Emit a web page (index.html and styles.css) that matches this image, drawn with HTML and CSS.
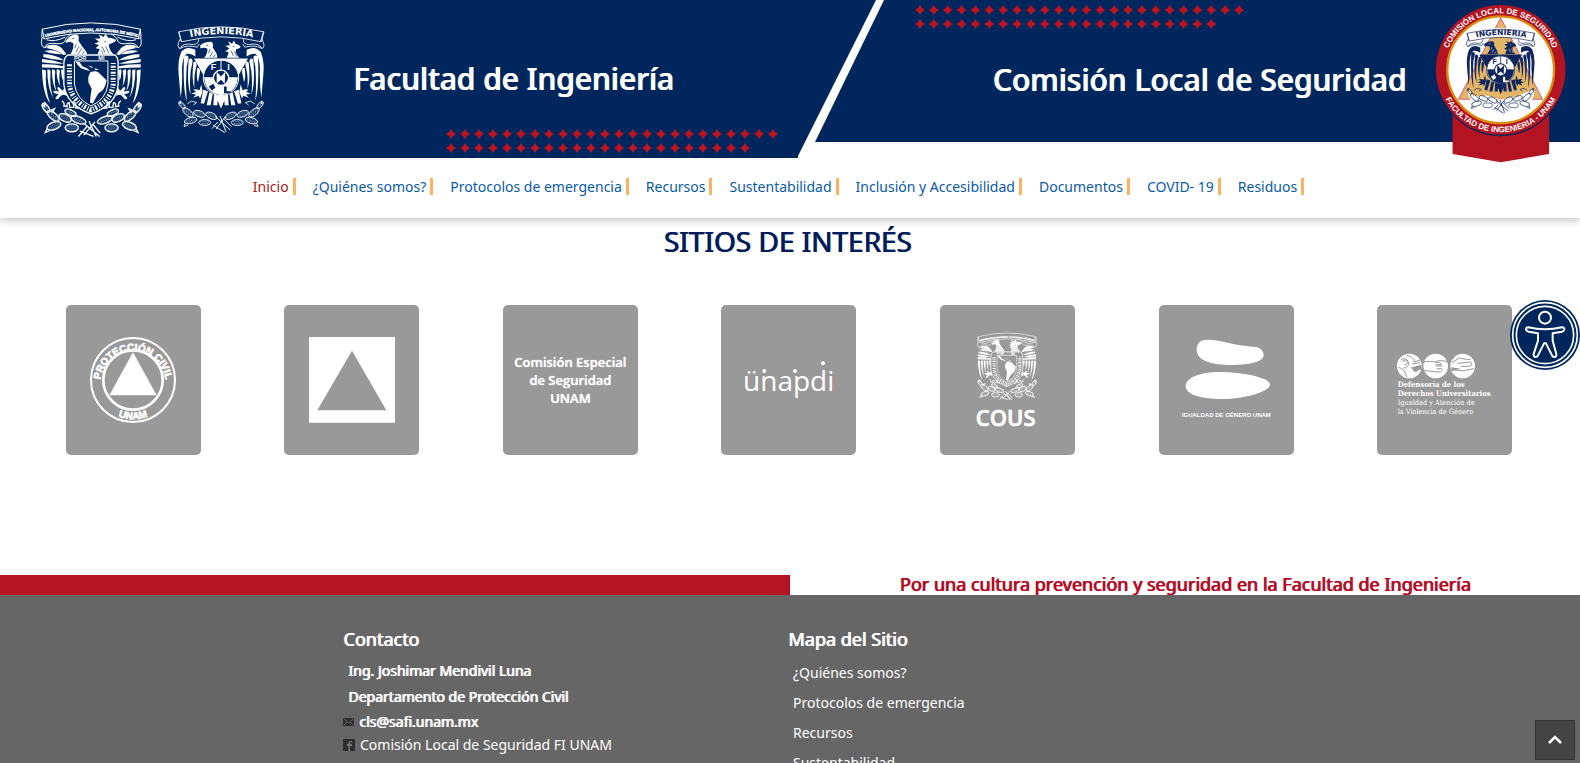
FILE: index.html
```html
<!DOCTYPE html>
<html lang="es">
<head>
<meta charset="utf-8">
<meta name="viewport" content="width=device-width, initial-scale=1">
<title>Comisión Local de Seguridad</title>
<link rel="stylesheet" href="styles.css">
</head>
<body>

<svg class="defs" aria-hidden="true">
  <defs>
    <pattern id="dotsA" x="444" y="127" width="14" height="14" patternUnits="userSpaceOnUse">
      <path class="star" d="M7 2L9 5L12 7L9 9L7 12L5 9L2 7L5 5Z"/>
    </pattern>
    <pattern id="dotsB" x="913" y="3" width="13.87" height="14" patternUnits="userSpaceOnUse">
      <path class="star" d="M7 2L9 5L12 7L9 9L7 12L5 9L2 7L5 5Z"/>
    </pattern>
    <pattern id="specks" width="8" height="8" patternUnits="userSpaceOnUse">
      <circle cx="2" cy="2" r="1.5" fill="#fff"/>
      <circle cx="6" cy="6" r="1.5" fill="#fff"/>
    </pattern>

    <symbol id="crest-unam" viewBox="120 60 314 352">
      <path id="unam-band" d="M136 108Q275 72 416 108" fill="none"/>
      <g fill="none" stroke="currentColor" stroke-width="3">
        <path d="M127 84Q275 46 423 84L417 113Q275 78 133 113Z"/>
        <path id="u-scroll" d="M127 84L125 108L133 113M126 110Q120 136 134 140Q140 122 172 128Q196 130 198 112L214 98M134 140Q160 126 180 140M140 116Q165 124 196 108"/>
        <use href="#u-scroll" transform="translate(550 0) scale(-1 1)"/>
      </g>
      <text class="band-text" fill="currentColor" stroke="currentColor" font-size="12"><textPath href="#unam-band">UNIVERSIDAD NACIONAL AUTONOMA DE MEXICO</textPath></text>
      <g id="u-wing" fill="currentColor">
        <path d="M133 150Q165 142 186 160Q172 160 150 156ZM130 160Q165 160 192 178Q160 178 130 168ZM126 174Q160 176 192 188Q160 190 126 184ZM126 190Q160 188 194 197L192 202Q158 200 126 200Z"/>
        <path d="M126 206Q138 206 138 212Q134 260 150 308Q128 280 126 206ZM142 206Q152 204 152 212Q148 258 160 292Q142 262 142 206ZM156 206Q164 204 166 211Q162 250 170 272Q156 252 156 206ZM170 206Q178 204 180 210Q176 240 182 258Q170 240 170 206ZM184 206Q190 204 192 210L190 240Q184 230 184 206Z"/>
        <path d="M142 134Q170 126 186 142L200 160L190 162Q172 146 142 142Z"/>
        <path d="M194 262L200 286Q188 276 178 290Q172 300 166 292L176 280Q160 280 160 270L178 272Q168 262 176 258L188 270Z"/>
        <path d="M186 300q10 8 6 16l10 2q-2 -12 6 -12l2 14l12 0l-2 -16q10 0 8 18l12 0" fill="none" stroke="currentColor" stroke-width="4"/>
      </g>
      <use href="#u-wing" transform="translate(550 0) scale(-1 1)"/>
      <path fill="currentColor" d="M198 120Q210 98 232 100Q240 106 236 118L246 134L260 152L262 160H212Q224 140 220 126Q208 120 198 126Z"/>
      <path fill="currentColor" d="M350 116Q334 108 326 110L318 98L312 108L298 100L302 112L286 112L298 122L284 128L298 132L288 142L300 144L294 160H342Q328 146 328 130Q340 126 346 122Z"/>
      <g stroke="var(--ink)" stroke-width="2" fill="none">
        <path d="M216 112h7M230 130l-6 12M238 136l-10 18M246 142l-10 16M254 150l-6 8M314 122h6M308 138l8 16M318 136l10 20M306 148l4 10"/>
      </g>
      <path fill="none" stroke="currentColor" stroke-width="4" d="M204 162H346Q358 170 356 196V250Q352 312 274 340Q198 312 192 250V196Q190 170 204 162Z"/>
      <path fill="none" stroke="currentColor" stroke-width="15" stroke-dasharray="6 5 3 4" d="M209 190V252Q216 302 274 328Q334 302 341 252V184"/>
      <path fill="var(--ink)" stroke="currentColor" stroke-width="3" d="M224 180H325V250Q320 296 274 316Q230 296 224 250Z"/>
      <text class="band-text" fill="currentColor" font-size="17" x="223" y="176">POR</text>
      <text class="band-text" fill="currentColor" font-size="17" x="296" y="176">MI</text>
      <g fill="currentColor">
        <path d="M227 182L240 184L248 196L262 202L272 210L262 208L244 202L234 192Z"/>
        <path d="M264 194L280 198L277 201ZM284 202L298 205L288 208Z"/>
        <path d="M272 214Q286 208 296 214L306 224L321 238Q318 256 310 268L296 278L286 296L280 308L271 306Q272 284 276 264L266 244Q264 226 272 214Z"/>
      </g>
      <g id="u-cactus" stroke="currentColor" stroke-width="4" fill="url(#specks)">
        <ellipse cx="138" cy="322" rx="16" ry="8" transform="rotate(55 138 322)"/>
        <ellipse cx="160" cy="346" rx="22" ry="10" transform="rotate(40 160 346)"/>
        <ellipse cx="162" cy="376" rx="22" ry="11" transform="rotate(-20 162 376)"/>
        <ellipse cx="196" cy="352" rx="20" ry="11" transform="rotate(25 196 352)"/>
        <ellipse cx="216" cy="382" rx="20" ry="12"/>
        <ellipse cx="236" cy="358" rx="24" ry="10" transform="rotate(20 236 358)"/>
        <ellipse cx="212" cy="336" rx="18" ry="8" transform="rotate(25 212 336)"/>
        <path fill="none" d="M126 312l8 6l-2 -12M134 304l6 10M150 330l14 -6l-8 14M142 384l-6 12l14 -6"/>
      </g>
      <use href="#u-cactus" transform="translate(552 0) scale(-1 1)"/>
      <path fill="none" stroke="currentColor" stroke-width="4" d="M252 368L300 408M268 362L290 408M286 364L252 404M262 378L236 408M280 372L302 398M240 392L282 408"/>
    </symbol>

    <symbol id="crest-fi" viewBox="528 72 270 326">
      <path id="fi-band" d="M548 114Q663 83 782 114" fill="none"/>
      <g fill="none" stroke="currentColor" stroke-width="2.5">
        <path d="M536 92Q663 62 792 92L784 122Q663 92 544 122Z"/>
        <path id="f-scroll" d="M536 92L544 120M540 114Q528 138 540 142Q548 124 580 130Q596 130 596 114M540 142Q560 130 592 138L598 128"/>
        <use href="#f-scroll" transform="translate(1326 0) scale(-1 1)"/>
      </g>
      <text class="band-text wide" fill="currentColor" font-size="29" text-anchor="middle"><textPath href="#fi-band" startOffset="50%">INGENIERIA</textPath></text>
      <g id="f-wing" fill="currentColor">
        <path d="M586 146Q560 132 544 152Q532 180 536 220L542 290Q548 250 546 200Q548 168 560 158Q574 156 586 166Z"/>
        <path d="M552 166Q564 158 566 170L560 196Q556 250 560 300Q548 260 552 166ZM566 176Q576 166 578 180L572 210Q568 250 572 280Q560 250 566 176ZM580 184Q588 176 590 190L584 220Q582 246 584 262Q574 240 580 184ZM592 200Q600 200 600 212L594 244Q588 230 592 200Z"/>
        <path d="M604 250L598 268Q590 262 580 266L588 272L574 278L588 280L580 290L596 284L600 292L608 272Z"/>
        <path d="M610 266L624 270L612 308L602 306ZM628 274L638 278L632 312H620ZM642 280L654 284L652 312H640Z"/>
      </g>
      <use href="#f-wing" transform="translate(1326 0) scale(-1 1)"/>
      <path fill="currentColor" d="M600 134Q610 122 634 122Q642 128 638 138L650 158L652 170H612Q624 158 622 142Q608 138 602 142Z"/>
      <path fill="currentColor" d="M722 136Q712 128 706 128L702 118L696 128L684 120L690 132L676 134L688 142L676 150L686 154L680 170H718Q706 158 708 144Q718 142 720 140Z"/>
      <path stroke="var(--ink)" stroke-width="2" fill="none" d="M618 132h6M630 144l-4 12M638 152l-8 14M646 160l-6 8M698 136h5M694 150l6 14M704 150l6 16"/>
      <path fill="currentColor" d="M582 172H744L700 250L663 318L626 250Z"/>
      <circle cx="663" cy="230" r="53" fill="var(--ink)" stroke="currentColor" stroke-width="3"/>
      <path fill="currentColor" d="M663 230V282A52 52 0 0 0 713 230ZM663 230H613A52 52 0 0 0 663 282Z"/>
      <path fill="var(--ink)" d="M626 256l14 -8l6 12l-10 8ZM672 256h8v14h12v6h-20Z"/>
      <path stroke="currentColor" stroke-width="3" d="M663 178V240M612 230H714"/>
      <circle cx="663" cy="230" r="23" fill="var(--ink)" stroke="currentColor" stroke-width="4"/>
      <path fill="currentColor" d="M650 212L663 226L676 212L674 248L663 236L650 248Z"/>
      <text class="band-text" fill="currentColor" font-size="27" x="632" y="207">F</text>
      <text class="band-text" fill="currentColor" font-size="27" x="682" y="207">I</text>
      <path fill="currentColor" d="M657 284H669V308L663 322L657 308Z"/>
      <g id="f-cactus" stroke="currentColor" stroke-width="2.5" fill="url(#specks)">
        <ellipse cx="546" cy="312" rx="13" ry="6" transform="rotate(50 546 312)"/>
        <ellipse cx="564" cy="334" rx="19" ry="9" transform="rotate(40 564 334)"/>
        <ellipse cx="572" cy="358" rx="19" ry="9" transform="rotate(-15 572 358)"/>
        <ellipse cx="598" cy="338" rx="18" ry="9" transform="rotate(20 598 338)"/>
        <ellipse cx="614" cy="364" rx="18" ry="9"/>
        <ellipse cx="634" cy="344" rx="18" ry="9" transform="rotate(25 634 344)"/>
        <path fill="none" d="M536 304l6 4l-2 -10M562 308l12 -8l16 4l-10 8M556 366l-4 10l12 -4"/>
      </g>
      <use href="#f-cactus" transform="translate(1326 0) scale(-1 1)"/>
      <path fill="none" stroke="currentColor" stroke-width="3" d="M646 346L690 386M660 344L678 392M676 346L648 384M654 362L636 382M672 354L694 376M640 372L674 394"/>
    </symbol>
  </defs>
</svg>

<header class="site-header">
  <div class="banner">
    <svg class="banner-art" viewBox="0 0 1580 158" preserveAspectRatio="none" aria-hidden="true">
      <path class="navy" d="M0 0H876L798 156V158H0ZM884 0H1580V142H815Z"/>
      <rect x="444" y="127" width="336" height="14" fill="url(#dotsA)"/>
      <rect x="444" y="141" width="308" height="14" fill="url(#dotsA)"/>
      <rect x="913" y="3" width="333" height="14" fill="url(#dotsB)"/>
      <rect x="913" y="17" width="305" height="14" fill="url(#dotsB)"/>
    </svg>
    <div class="banner-left">
      <svg class="crest-unam" role="img" aria-label="UNAM"><use href="#crest-unam"/></svg>
      <svg class="crest-fi" role="img" aria-label="Ingeniería"><use href="#crest-fi"/></svg>
      <p class="banner-title">Facultad de Ingeniería</p>
    </div>
    <div class="banner-right">
      <h1 class="banner-title">Comisión Local de Seguridad</h1>
      <svg class="seal" viewBox="585 14 394 476" role="img" aria-label="Comisión Local de Seguridad, Facultad de Ingeniería, UNAM">
        <path fill="#b41322" d="M637 340H926V463L781 488L637 463Z"/>
        <circle cx="781" cy="216" r="194" fill="#00275d"/>
        <circle cx="781" cy="211" r="194" fill="#b41322"/>
        <circle cx="781" cy="211" r="160" fill="#fff" stroke="#dc8a0c" stroke-width="7"/>
        <path fill="#e3b566" stroke="#d8627a" stroke-width="3" d="M781 56L906 299H655Z"/>
        <path fill="#fff" d="M682 100Q781 72 882 100L876 124L880 142H850L846 126Q781 98 718 126L712 142H680Z"/>
        <path fill="#fff" d="M680 272L700 290L740 288L780 300L830 290L884 268L876 300L876 326L790 344L700 332Z"/>
        <svg class="seal-crest" x="674" y="84" width="214" height="262"><use href="#crest-fi"/></svg>
        <path id="seal-top" fill="none" d="M612 211A169 169 0 0 1 950 211"/>
        <path id="seal-bottom" fill="none" d="M594 211A187 187 0 0 0 968 211"/>
        <text class="seal-text" text-anchor="middle"><textPath href="#seal-top" startOffset="50%">COMISIÓN LOCAL DE SEGURIDAD</textPath></text>
        <text class="seal-text" text-anchor="middle"><textPath href="#seal-bottom" startOffset="50%">FACULTAD DE INGENIERIA - UNAM</textPath></text>
      </svg>
    </div>
  </div>
  <nav class="main-nav" aria-label="Principal">
    <a class="active" href="#">Inicio</a>
    <a href="#">¿Quiénes somos?</a>
    <a href="#">Protocolos de emergencia</a>
    <a href="#">Recursos</a>
    <a href="#">Sustentabilidad</a>
    <a href="#">Inclusión y Accesibilidad</a>
    <a href="#">Documentos</a>
    <a href="#">COVID- 19</a>
    <a href="#">Residuos</a>
  </nav>
</header>

<main>
  <h2 class="section-title">SITIOS DE INTERÉS</h2>
  <div class="sites">
    <a class="card" href="#" aria-label="Protección Civil UNAM">
      <svg viewBox="78 45 405 450">
        <circle cx="279" cy="270" r="126" fill="none" stroke="#fff" stroke-width="6"/>
        <circle cx="279" cy="270" r="89" fill="none" stroke="#fff" stroke-width="8"/>
        <path fill="#fff" d="M279 187L350 316H208Z"/>
        <path id="pc-top" fill="none" d="M181 280A98 98 0 1 1 377 280"/>
        <path id="pc-bottom" fill="none" d="M161 270A118 118 0 0 0 397 270"/>
        <text class="card-bold heavy" font-size="30" text-anchor="middle"><textPath href="#pc-top" startOffset="50%">PROTECCIÓN CIVIL</textPath></text>
        <text class="card-bold heavy" font-size="30" text-anchor="middle"><textPath href="#pc-bottom" startOffset="50%">UNAM</textPath></text>
      </svg>
    </a>
    <a class="card" href="#" aria-label="Protección Civil">
      <svg viewBox="732 45 405 450"><path fill="#fff" fill-rule="evenodd" d="M807 141H1065V398H807ZM936 182L832 361H1039Z"/></svg>
    </a>
    <a class="card card-label" href="#">Comisión Especial<br>de Seguridad<br>UNAM</a>
    <a class="card" href="#" aria-label="unapdi">
      <svg viewBox="723 45 405 450">
        <text class="card-light" font-size="84" x="926" y="302" text-anchor="middle">ünapdi</text>
        <g fill="#fff"><circle cx="853" cy="243" r="6"/><circle cx="945" cy="243" r="6"/><circle cx="1029" cy="220" r="6"/></g>
      </svg>
    </a>
    <a class="card" href="#" aria-label="COUS">
      <svg class="cous" viewBox="60 45 405 450">
        <svg x="170" y="126" width="184" height="206"><use href="#crest-unam"/></svg>
        <text class="card-semi heavy" font-size="66" x="257" y="408" text-anchor="middle">COUS</text>
      </svg>
    </a>
    <a class="card" href="#" aria-label="Igualdad de Género UNAM">
      <svg viewBox="714 45 405 450">
        <path fill="#fff" d="M852 150C890 146 940 168 995 170C1020 170 1028 184 1028 196C1028 214 990 225 935 225C870 225 828 212 827 180C827 162 836 151 852 150Z"/>
        <path fill="#fff" d="M794 288C794 262 840 246 895 246C960 246 1047 262 1047 284C1047 304 970 327 905 327C840 327 794 314 794 288Z"/>
        <text class="card-bold" font-size="18" x="916" y="380" text-anchor="middle">IGUALDAD DE GÉNERO UNAM</text>
      </svg>
    </a>
    <a class="card" href="#" aria-label="Defensoría de los Derechos Universitarios">
      <svg viewBox="111 75 405 450">
        <g fill="#fff"><circle cx="208" cy="258" r="37"/><circle cx="287" cy="258" r="37"/><circle cx="368" cy="258" r="37"/></g>
        <g fill="none" stroke="#999" stroke-width="3">
          <path d="M182 240a14 14 0 1 1 8 24M188 246a7 7 0 1 1 4 8M176 262q20 6 24 30M200 226q20 4 24 20l16 -6M216 252l24 -4M212 262l20 14"/>
          <path d="M250 246q18 -4 34 0q16 -8 40 0M250 272q20 0 40 4q14 2 18 -6M286 248q16 -4 18 6h-18M288 258h20M290 266h16"/>
          <path d="M336 248l22 -14q20 6 34 4M352 250l40 -4q8 6 0 12l-30 2M340 270l30 2l32 -6M332 240l12 -8"/>
        </g>
        <path fill="#999" d="M216 262l28 -8v14l-22 8ZM334 262l28 4l-28 8Z"/>
        <text class="card-serif" font-weight="700" font-size="23" x="173" y="320">Defensoría de los</text>
        <text class="card-serif" font-weight="700" font-size="23" x="173" y="347">Derechos Universitarios</text>
        <text class="card-serif" font-size="22" x="173" y="375">Igualdad y Atención de</text>
        <text class="card-serif" font-size="22" x="173" y="402">la Violencia de Género</text>
      </svg>
    </a>
  </div>
  <div class="motto">
    <div class="motto-bar"></div>
    <p class="motto-text">Por una cultura prevención y seguridad en la Facultad de Ingeniería</p>
  </div>
</main>

<footer class="site-footer">
  <section class="contact">
    <h3>Contacto</h3>
    <p class="person">Ing. Joshimar Mendivil Luna</p>
    <p class="person">Departamento de Protección Civil</p>
    <a class="mail" href="mailto:cls@safi.unam.mx">
      <svg width="11" height="8" viewBox="0 0 11 8" aria-hidden="true"><rect width="11" height="8" rx="1" fill="#2e2e2e"/><path d="M1 1L5.500 5L10 1M1 7L4 4M10 7L7 4" fill="none" stroke="#777" stroke-width=".7"/></svg>
      cls@safi.unam.mx
    </a>
    <a class="facebook" href="#">
      <svg width="12" height="12" viewBox="0 0 12 12" aria-hidden="true"><rect width="12" height="12" rx="1" fill="#2e2e2e"/><path d="M7 12V7H9V5H7V4Q7 3.200 8 3.200H9V2H7.500Q5.500 2 5.500 4V5H4V7H5.500V12" fill="#777"/></svg>
      Comisión Local de Seguridad FI UNAM
    </a>
  </section>
  <nav class="sitemap" aria-label="Mapa del sitio">
    <h3>Mapa del Sitio</h3>
    <a href="#">¿Quiénes somos?</a>
    <a href="#">Protocolos de emergencia</a>
    <a href="#">Recursos</a>
    <a href="#">Sustentabilidad</a>
  </nav>
</footer>

<button class="a11y" type="button" aria-label="Accesibilidad">
  <svg viewBox="510 60 210 210">
    <circle cx="615" cy="165" r="105" fill="#00275d"/>
    <circle cx="615" cy="165" r="97" fill="none" stroke="#fff" stroke-width="5"/>
    <circle cx="615" cy="165" r="86" fill="none" stroke="#fff" stroke-width="5"/>
    <g fill="none" stroke="#fff" stroke-width="6" stroke-linejoin="round">
      <circle cx="615" cy="113" r="18"/>
      <path d="M564 142Q590 148 615 148Q640 148 666 142Q674 142 673 149Q672 154 666 155L638 160V182L649 222Q650 231 643 231Q638 231 636 226L618 190H612L594 226Q592 231 587 231Q580 231 581 222L594 182V160L566 155Q558 153 558 148Q559 142 564 142Z"/>
    </g>
  </svg>
</button>
<button class="to-top" type="button" aria-label="Volver arriba">
  <svg width="14" height="10" viewBox="0 0 14 10"><path d="M1 8L7 2L13 8" fill="none" stroke="#fff" stroke-width="2.500"/></svg>
</button>

</body>
</html>
```
FILE: styles.css
```css
:root {
  --navy: #00275d;
  --red: #b41322;
  --sans: "Noto Sans", "Open Sans", sans-serif;
}

* { box-sizing: border-box; }

html { scrollbar-width: none; }

body {
  margin: 0;
  background: #fff;
  font-family: var(--sans);
  font-size: 14px;
}

h1, h2, h3, p { margin: 0; }
a { text-decoration: none; color: inherit; }
svg { display: block; }

.defs { position: absolute; width: 0; height: 0; }
.star { fill: #c1121f; }
.navy { fill: var(--navy); }

.band-text { font-family: "Liberation Sans", sans-serif; font-weight: 700; }
.band-text.wide { font-family: "DejaVu Sans", sans-serif; }

/* Regular weight thickened by a one-pixel shadow */
.banner-title, .section-title, .motto-text, .site-footer h3, .person, .mail {
  font-weight: 400;
  text-shadow: 1px 0 currentColor;
}

/* Header */
.site-header {
  position: relative;
  background: #fff;
  box-shadow: 0 2px 8px rgba(0, 0, 0, .25);
}

.banner {
  position: relative;
  display: grid;
  grid-template-columns: 1fr 1fr;
  min-height: 158px;
  color: #fff;
}

.banner-art { position: absolute; inset: 0; width: 100%; height: 100%; }

.banner-left, .banner-right {
  position: relative;
  display: flex;
  --ink: var(--navy);
}

.banner-left { align-items: center; padding-left: 40px; }
.banner-right { justify-content: flex-end; align-items: flex-start; padding-right: 13px; gap: 29px; }

.crest-unam { width: 104px; height: 117px; flex: none; }
.crest-fi { width: 90px; height: 109px; flex: none; margin-left: 32px; }

.banner-title {
  font-size: 30px;
  line-height: 44px;
  font-weight: 500;
  white-space: nowrap;
}
.banner-left .banner-title { margin-left: 87px; }
.banner-right .banner-title { margin-top: 58px; }

.seal { width: 132px; height: 159px; margin: 4px 0 -5px; flex: none; }
.seal-crest { color: #0f2560; --ink: #fff; }
.seal-text {
  fill: #fff;
  font-family: "Liberation Sans", sans-serif;
  font-weight: 700;
  font-size: 24px;
}

.main-nav {
  display: flex;
  flex-wrap: wrap;
  justify-content: center;
  align-items: center;
  min-height: 60px;
  padding: 0 6px 3px 0;
  color: #0b5aa6;
}
.main-nav a { display: flex; align-items: center; margin-right: 17px; line-height: 17px; }
.main-nav a::after { content: ""; width: 3px; height: 17px; margin-left: 4px; background: #ffb060; }
.main-nav .active { color: #ab1a20; }

/* Sites */
.section-title {
  padding: 3px 5px 0 0;
  text-align: center;
  color: #001c5a;
  font-size: 28px;
  line-height: 40px;
}

.sites {
  display: grid;
  grid-template-columns: repeat(auto-fit, minmax(200px, 1fr));
  justify-items: center;
  row-gap: 24px;
  padding: 44px 26px 120px 24px;
}

.card {
  display: block;
  width: 135px;
  height: 150px;
  border-radius: 5px;
  background: #999;
  color: #fff;
}
.card svg { width: 100%; height: 100%; }
.card .cous svg { width: 184px; height: 206px; }
.cous { --ink: #999; }
.card-label {
  display: flex;
  flex-direction: column;
  justify-content: center;
  text-align: center;
  font-family: "Open Sans", sans-serif;
  font-size: 13px;
  line-height: 18px;
  font-weight: 600;
  text-shadow: 0 0 1px #fff;
}
.card text { fill: #fff; }
.card .heavy { stroke: #fff; stroke-width: 2px; }
.card-bold { font-family: "Liberation Sans", sans-serif; font-weight: 700; }
.card-light { font-family: "Open Sans", sans-serif; font-weight: 500; }
.card-semi { font-family: "Open Sans", sans-serif; font-weight: 600; }
.card-serif { font-family: "DejaVu Serif Condensed", "DejaVu Serif", serif; }

/* Motto */
.motto { display: grid; grid-template-columns: 1fr 1fr; height: 20px; overflow: hidden; }
.motto-bar { background: var(--red); }
.motto-text {
  color: #b5091f;
  text-align: center;
  font-size: 18px;
  line-height: 18px;
  white-space: nowrap;
}

/* Footer */
.site-footer {
  display: grid;
  grid-template-columns: 445px 1fr;
  padding: 31px 0 40px 343px;
  background: #666;
  color: #fff;
}
.site-footer h3 { font-size: 18px; line-height: 26px; margin-bottom: 6px; }
.person { padding-left: 5px; font-size: 14px; line-height: 26px; }
.mail, .facebook { display: flex; align-items: center; gap: 5px; line-height: 22px; }
.mail { font-size: 14px; line-height: 24px; }
.sitemap { display: flex; flex-direction: column; }
.sitemap a { padding-left: 5px; line-height: 30px; }

/* Floating controls */
.a11y {
  position: fixed;
  right: 0;
  top: 300px;
  width: 70px;
  height: 70px;
  padding: 0;
  border: 0;
  border-radius: 50%;
  background: none;
}
.to-top {
  position: fixed;
  right: 5px;
  bottom: 3px;
  display: grid;
  place-items: center;
  width: 40px;
  height: 40px;
  padding: 0;
  border: 1px solid #333;
  background: #444;
}
```
